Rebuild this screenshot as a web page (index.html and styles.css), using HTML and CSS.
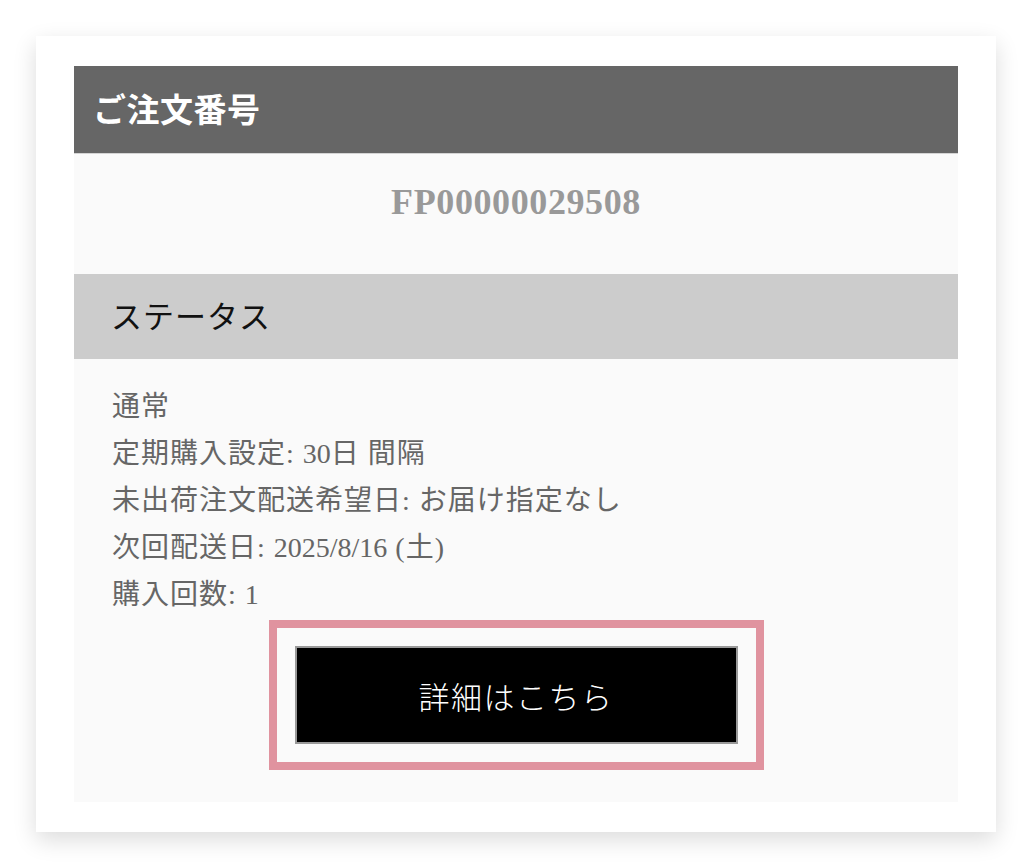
FILE: index.html
```html
<!DOCTYPE html>
<html lang="ja">
<head>
<meta charset="utf-8">
<title>ご注文番号</title>
<link rel="stylesheet" href="styles.css">
</head>
<body>
<div class="card">
  <div class="panel">
    <div class="order-head">ご注文番号</div>
    <div class="order-number">FP00000029508</div>
    <div class="status-head">ステータス</div>
    <div class="status-body">
      <p class="line">通常</p>
      <p class="line">定期購入設定: <span class="num">30</span>日 間隔</p>
      <p class="line">未出荷注文配送希望日: お届け指定なし</p>
      <p class="line">次回配送日: <span class="num">2025/8/16</span> (土)</p>
      <p class="line">購入回数: <span class="num">1</span></p>
      <div class="btn-wrap">
        <a class="btn" href="#">詳細はこちら</a>
      </div>
    </div>
  </div>
</div>
</body>
</html>
```

FILE: styles.css
```css
html, body {
  margin: 0;
  padding: 0;
  background: #ffffff;
}
body {
  padding: 36px;
  font-family: "Liberation Serif", "Noto Sans CJK JP", serif;
}
.card {
  width: 960px;
  height: 796px;
  box-sizing: border-box;
  padding: 30px 38px;
  background: #ffffff;
  box-shadow: 0 8px 22px rgba(0, 0, 0, 0.14);
}
.panel {
  background: #fafafa;
  height: 736px;
  display: flex;
  flex-direction: column;
}
.order-head {
  height: 88px;
  box-sizing: border-box;
  background: #666666;
  border-bottom: 1px solid #d4d4d4;
  color: #ffffff;
  font-family: "Noto Sans CJK JP", sans-serif;
  font-weight: 700;
  font-size: 33px;
  letter-spacing: 0.5px;
  display: flex;
  align-items: center;
  padding-left: 19px;
  padding-bottom: 4px;
}
.order-number {
  height: 120px;
  display: flex;
  align-items: center;
  justify-content: center;
  color: #999999;
  font-family: "Liberation Serif", serif;
  font-weight: 700;
  font-size: 36px;
  letter-spacing: 0.6px;
  padding-bottom: 24px;
  box-sizing: border-box;
}
.status-head {
  height: 85px;
  box-sizing: border-box;
  background: #cccccc;
  color: #111111;
  font-family: "Noto Sans CJK JP", sans-serif;
  font-size: 31px;
  letter-spacing: 1px;
  display: flex;
  align-items: center;
  padding-left: 37px;
  padding-bottom: 5px;
}
.status-body {
  padding: 24px 38px 0;
  color: #666666;
  font-size: 28px;
  letter-spacing: 1px;
}
.line {
  margin: 0;
  line-height: 47px;
}
.num {
  letter-spacing: 0;
}
.btn-wrap {
  margin: 2px auto 0;
  width: 495px;
  height: 150px;
  box-sizing: border-box;
  border: 8px solid #e0939f;
  padding: 18px;
  display: flex;
  letter-spacing: 0;
}
.btn {
  flex: 1;
  background: #000000;
  border: 2px solid #999999;
  color: #ffffff;
  text-decoration: none;
  font-family: "Noto Sans CJK JP", sans-serif;
  font-weight: 300;
  font-size: 31px;
  letter-spacing: 1.5px;
  display: flex;
  align-items: center;
  justify-content: center;
}
```
